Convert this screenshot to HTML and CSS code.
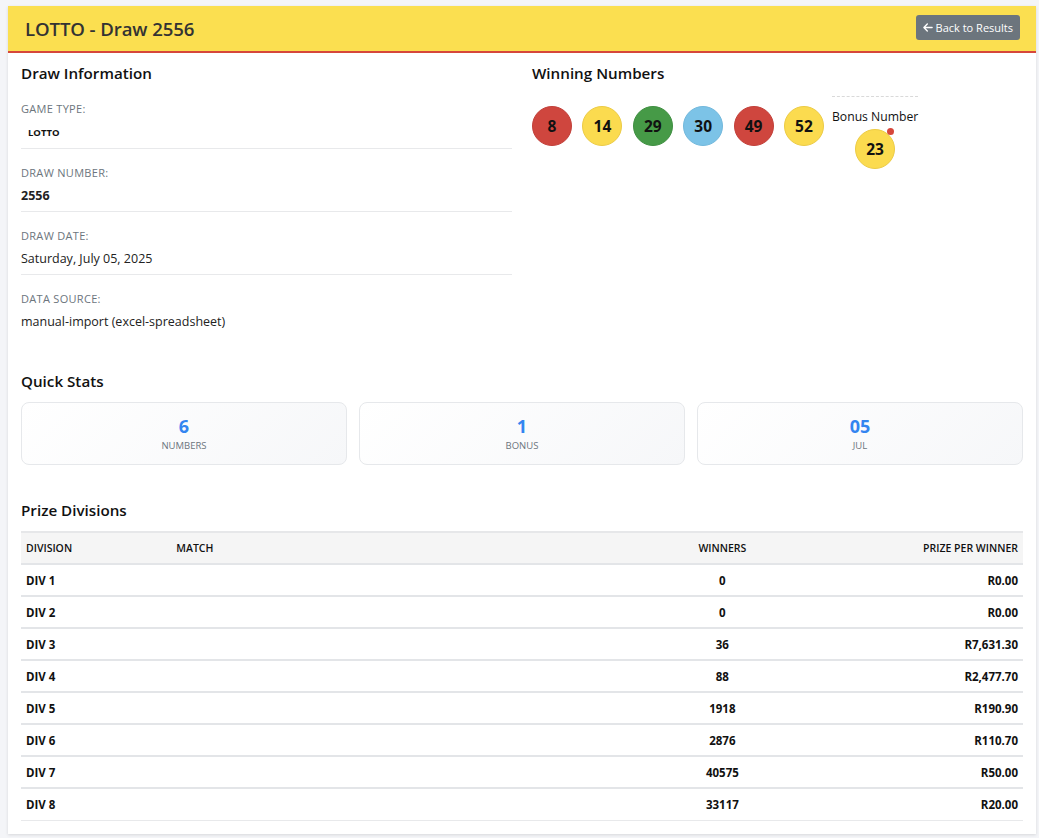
FILE: index.html
```html
<!DOCTYPE html>
<html lang="en">
<head>
<meta charset="utf-8">
<title>LOTTO - Draw 2556</title>
<link rel="stylesheet" href="styles.css">
</head>
<body>
<div class="card">
  <div class="card-header">
    <h1 class="title">LOTTO - Draw 2556</h1>
    <a class="btn-back" href="#"><svg class="arrow" viewBox="0 0 448 512" width="10" height="11"><path fill="currentColor" d="M9.4 233.4c-12.5 12.5-12.5 32.8 0 45.3l160 160c12.5 12.5 32.8 12.5 45.3 0s12.5-32.8 0-45.3L109.2 288H416c17.7 0 32-14.3 32-32s-14.3-32-32-32H109.3L214.6 118.6c12.5-12.5 12.5-32.8 0-45.3s-32.8-12.5-45.3 0l-160 160z"/></svg>Back to Results</a>
  </div>
  <div class="card-body">
    <div class="top-grid">
      <section class="col">
        <h2 class="section-title">Draw Information</h2>
        <div class="info-item first">
          <div class="info-label">Game Type:</div>
          <div class="info-value"><span class="badge">LOTTO</span></div>
        </div>
        <div class="info-item">
          <div class="info-label">Draw Number:</div>
          <div class="info-value strong">2556</div>
        </div>
        <div class="info-item">
          <div class="info-label">Draw Date:</div>
          <div class="info-value">Saturday, July 05, 2025</div>
        </div>
        <div class="info-item last">
          <div class="info-label">Data Source:</div>
          <div class="info-value">manual-import (excel-spreadsheet)</div>
        </div>
      </section>
      <section class="col">
        <h2 class="section-title">Winning Numbers</h2>
        <div class="balls">
          <span class="ball red">8</span>
          <span class="ball yellow">14</span>
          <span class="ball green">29</span>
          <span class="ball blue">30</span>
          <span class="ball red">49</span>
          <span class="ball yellow">52</span>
          <div class="bonus">
            <div class="bonus-label">Bonus Number</div>
            <span class="ball yellow bonus-ball">23<span class="dot"></span></span>
          </div>
        </div>
      </section>
    </div>

    <h2 class="section-title stats-title">Quick Stats</h2>
    <div class="stats">
      <div class="stat"><div class="stat-num">6</div><div class="stat-label">Numbers</div></div>
      <div class="stat"><div class="stat-num">1</div><div class="stat-label">Bonus</div></div>
      <div class="stat"><div class="stat-num">05</div><div class="stat-label">Jul</div></div>
    </div>

    <h2 class="section-title prize-title">Prize Divisions</h2>
    <table class="prize-table">
      <thead>
        <tr><th class="c-div">Division</th><th class="c-match">Match</th><th class="c-win">Winners</th><th class="c-prize">Prize Per Winner</th></tr>
      </thead>
      <tbody>
        <tr><td>DIV 1</td><td></td><td class="c-win">0</td><td class="c-prize">R0.00</td></tr>
        <tr><td>DIV 2</td><td></td><td class="c-win">0</td><td class="c-prize">R0.00</td></tr>
        <tr><td>DIV 3</td><td></td><td class="c-win">36</td><td class="c-prize">R7,631.30</td></tr>
        <tr><td>DIV 4</td><td></td><td class="c-win">88</td><td class="c-prize">R2,477.70</td></tr>
        <tr><td>DIV 5</td><td></td><td class="c-win">1918</td><td class="c-prize">R190.90</td></tr>
        <tr><td>DIV 6</td><td></td><td class="c-win">2876</td><td class="c-prize">R110.70</td></tr>
        <tr><td>DIV 7</td><td></td><td class="c-win">40575</td><td class="c-prize">R50.00</td></tr>
        <tr><td>DIV 8</td><td></td><td class="c-win">33117</td><td class="c-prize">R20.00</td></tr>
      </tbody>
    </table>
  </div>
</div>
</body>
</html>
```

FILE: styles.css
```css
* { box-sizing: border-box; }
html, body { margin: 0; padding: 0; }
body {
  background: #f4f5f8;
  font-family: "Open Sans", "Noto Sans", "Liberation Sans", sans-serif;
  color: #212529;
  padding: 6px 3px 5px 8px;
}
.card {
  background: #fff;
  box-shadow: 0 1px 3px rgba(0,0,0,0.12);
}
.card-header {
  background: #fbdf50;
  border-bottom: 2px solid #d6473b;
  height: 47px;
  padding: 0 16px 0 17px;
  display: flex;
  align-items: center;
  justify-content: space-between;
}
.title {
  margin: 0;
  font-size: 18.6px;
  font-weight: 600;
  color: #333;
  letter-spacing: -0.1px;
  margin-top: -1px;
}
.btn-back {
  display: flex;
  align-items: center;
  gap: 3px;
  background: #6c757d;
  color: #fff;
  text-decoration: none;
  font-size: 11px;
  height: 25px;
  padding: 0 7px;
  border-radius: 3px;
  margin-top: -2px;
}
.card-body {
  padding: 10px 13px 13px;
}
.top-grid {
  display: grid;
  grid-template-columns: 1fr 1fr;
  column-gap: 20px;
}
.section-title {
  margin: 0;
  font-size: 15.2px;
  font-weight: 600;
  line-height: 20px;
  color: #111;
}
.info-item {
  padding: 16px 0 5px;
  border-bottom: 1px solid #e8e9eb;
}
.info-item.last { border-bottom: none; }
.info-item.first { padding-top: 18px; }
.info-label {
  font-size: 11px;
  line-height: 16px;
  color: #6c757d;
  text-transform: uppercase;
  letter-spacing: 0.3px;
  margin-bottom: 5px;
}
.info-value {
  font-size: 12.5px;
  line-height: 20px;
  color: #222;
}
.info-value.strong { font-weight: 700; }
.badge {
  display: inline-block;
  font-size: 9.5px;
  font-weight: 700;
  padding: 0 7px;
  color: #111;
}
.balls {
  display: flex;
  align-items: flex-start;
  gap: 10.4px;
  margin-top: 13px;
}
.ball {
  position: relative;
  width: 40px;
  height: 40px;
  border-radius: 50%;
  display: flex;
  align-items: center;
  justify-content: center;
  font-weight: 700;
  font-size: 15.5px;
  color: #111;
  margin-top: 10px;
  flex: none;
}
.ball.red { background: #cf463e; border: 1px solid #c2403a; }
.ball.yellow { background: #fbdb4f; border: 1px solid #eccb45; }
.ball.green { background: #469a47; border: 1px solid #3f8f41; }
.ball.blue { background: #7cc3e7; border: 1px solid #72b8dc; }
.bonus {
  margin-left: -2.4px;
  border-top: 1px dashed #d9d9d9;
  display: flex;
  flex-direction: column;
  align-items: center;
  padding-top: 11px;
}
.bonus-label {
  font-size: 12.2px;
  font-weight: 500;
  line-height: 17px;
  color: #111;
}
.bonus-ball { margin-top: 4px; }
.dot {
  position: absolute;
  top: -2px;
  right: 0;
  width: 7px;
  height: 7px;
  border-radius: 50%;
  background: #d6473b;
}
.stats-title { margin-top: 34px; }
.stats {
  display: grid;
  grid-template-columns: repeat(3, 1fr);
  gap: 12px;
  margin-top: 11px;
}
.stat {
  height: 63px;
  border: 1px solid #e6e8eb;
  border-radius: 8px;
  background: linear-gradient(135deg, #ffffff 0%, #f6f7f9 100%);
  display: flex;
  flex-direction: column;
  align-items: center;
  justify-content: center;
}
.stat-num {
  font-size: 18px;
  font-weight: 700;
  line-height: 22px;
  color: #3385f0;
}
.stat-label {
  font-size: 9.5px;
  line-height: 14px;
  color: #6c757d;
  text-transform: uppercase;
  margin-top: 2px;
}
.prize-title { margin-top: 35px; }
.prize-table {
  width: 100%;
  border-collapse: collapse;
  margin-top: 11px;
  font-size: 11.5px;
}
.prize-table th {
  background: #f5f5f5;
  font-weight: 600;
  text-transform: uppercase;
  font-size: 10.5px;
  height: 32px;
  padding: 0 5px;
  text-align: left;
  border-top: 2px solid #e6e7e9;
  border-bottom: 2px solid #e3e5e8;
  color: #111;
}
.prize-table td {
  height: 32px;
  padding: 0 5px;
  font-weight: 700;
  border-bottom: 2px solid #e3e5e8;
  color: #111;
}
.prize-table tr:last-child td { border-bottom: 1px solid #e8e9eb; }
.prize-table .c-div { width: 15%; }
.prize-table .c-match { width: 45%; }
.prize-table .c-win { width: 20%; text-align: center; }
.prize-table .c-prize { width: 20%; text-align: right; }
```
